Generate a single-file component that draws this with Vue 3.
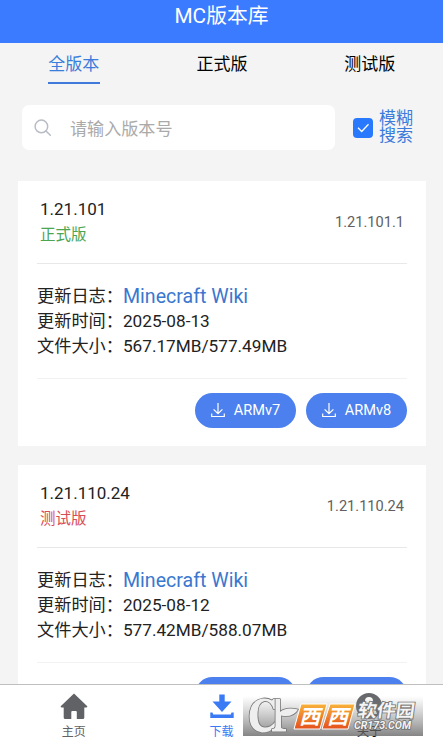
<script setup>
const tabs = ['全版本', '正式版', '测试版']
const releases = [
  { name: '1.21.101', full: '1.21.101.1', type: '正式版', kind: 'stable', date: '2025-08-13', size: '567.17MB/577.49MB' },
  { name: '1.21.110.24', full: '1.21.110.24', type: '测试版', kind: 'beta', date: '2025-08-12', size: '577.42MB/588.07MB' },
]
const archs = ['ARMv7', 'ARMv8']
</script>

<template>
  <div class="app">
    <header class="header">MC版本库</header>
    <nav class="tabs">
      <div v-for="(t, i) in tabs" :key="t" class="tab"><span :class="{ active: i === 0 }">{{ t }}</span></div>
    </nav>
    <div class="search">
      <div class="field">
        <svg width="18" height="18" viewBox="0 0 18 18" fill="none" stroke="#b8bcc4" stroke-width="1.5" stroke-linecap="round">
          <circle cx="7.4" cy="7.4" r="6.3" /><path d="M12 12L16.3 16.3" />
        </svg>
        <span>请输入版本号</span>
      </div>
      <div class="check">
        <svg width="20" height="20" viewBox="0 0 20 20" fill="none" stroke="#fff" stroke-width="1.3">
          <path d="M5 9.8L8.7 13.5L15.5 6.3" />
        </svg>
      </div>
      <div class="fuzzy">模糊<br />搜索</div>
    </div>
    <main class="list">
      <section v-for="r in releases" :key="r.name" class="card">
        <div class="top">
          <div>
            <div class="name">{{ r.name }}</div>
            <div class="type" :class="r.kind">{{ r.type }}</div>
          </div>
          <div class="full">{{ r.full }}</div>
        </div>
        <div class="body">
          <div class="row">更新日志：<a>Minecraft Wiki</a></div>
          <div class="row">更新时间：<span>{{ r.date }}</span></div>
          <div class="row">文件大小：<span>{{ r.size }}</span></div>
        </div>
        <div class="actions">
          <button v-for="a in archs" :key="a">
            <svg width="14" height="15" viewBox="0 0 14 15" fill="none" stroke="#fff" stroke-width="1.2">
              <path d="M7 0V10.6M2.6 6.4L7 10.7L11.4 6.4M.7 10.5V13.5H13.3V10.5" />
            </svg>
            <span>{{ a }}</span>
          </button>
        </div>
      </section>
    </main>
    <footer class="bottom">
      <div class="item">
        <svg width="28" height="27" viewBox="0 0 28 27"><path fill="#606266" d="M14 .5L27.3 13.2Q27.6 14.6 26 14.6H24.3V24.5Q24.3 26 22.8 26H16.8V19Q16.8 18 15.8 18H12.3Q11.3 18 11.3 19V26H5.2Q3.7 26 3.7 24.5V14.6H2Q.4 14.6 .7 13.2Z" /></svg>
        <span>主页</span>
      </div>
      <div class="item on">
        <svg width="28" height="27" viewBox="0 0 28 27"><path fill="#3a7bf5" d="M11.3 1.5H16.7V8.5H23.5L14 19L4.5 8.500H11.3ZM2.3 19.5H4.5L5.2 21.5H22.8L23.5 19.5H25.7V25H2.3Z" /></svg>
        <span>下载</span>
      </div>
      <div class="item about">
        <svg width="28" height="27" viewBox="0 0 28 27"><circle cx="14" cy="13" r="13" fill="#66686b" /><circle cx="14" cy="8" r="4" fill="#fff" /><path d="M6 21Q7 14.500 14 14.500T22 21Z" fill="#fff" /></svg>
        <span>关于</span>
      </div>
    </footer>
    <svg class="mark" width="180" height="40" viewBox="0 0 180 40">
      <defs>
        <linearGradient id="haze" x2="0" y2="1"><stop stop-color="#888" stop-opacity="0" /><stop offset="1" stop-color="#666" stop-opacity=".8" /></linearGradient>
        <linearGradient id="amber" x2="0" y2="1"><stop stop-color="#f8b339" /><stop offset="1" stop-color="#e5501d" /></linearGradient>
      </defs>
      <rect width="180" height="40" fill="url(#haze)" />
      <g fill="#eee" stroke="#777" stroke-width="1.6" stroke-linejoin="round" paint-order="stroke">
        <path d="M32 3V13H30.500Q28 5 22 5Q14.500 6 14.500 19Q14.500 31.500 22 31.500Q28 31.500 32 26V31Q27 36.500 19 36.500Q6.500 34.500 6.500 20Q7 4.500 20 2.500Q25 2 29 4.500L30.500 3Z" />
        <path d="M32.500 3H37V16Q43 10.500 55 13.500Q50 22 38 19.500V31Q38 33 43 33V35.500H29V33Q32.500 33 32.500 30Z" />
      </g>
      <g fill="url(#amber)" stroke="#fff" stroke-width="1">
        <path d="M58 8H84L77 33H51Z" /><path d="M87 8H112L105 33H79Z" />
      </g>
      <g class="tiles">
        <text transform="translate(56 27.500) skewX(-15)" textLength="21" lengthAdjust="spacingAndGlyphs">西</text>
        <text transform="translate(84 27.500) skewX(-15)" textLength="21" lengthAdjust="spacingAndGlyphs">西</text>
      </g>
      <g class="words">
        <text x="114" y="21.5" font-size="18" textLength="57" lengthAdjust="spacingAndGlyphs" transform="skewX(-8) translate(3 0)">软件园</text>
        <text x="111" y="32.5" font-size="10.5" textLength="57" lengthAdjust="spacingAndGlyphs" class="latin">CR173.COM</text>
      </g>
    </svg>
  </div>
</template>

<style>
body { margin: 0; overflow: hidden; }
</style>

<style scoped>
.app { position: relative; height: 746px; overflow: hidden; display: flex; flex-direction: column; background: #f4f4f4; color: #222; font-family: Roboto, "Noto Sans CJK SC", sans-serif; }
.header { height: 42.5px; flex: none; box-sizing: border-box; background: #3b7bff; color: #fff; font-size: 20.8px; line-height: 32px; text-align: center; }
.tabs { display: flex; height: 62.5px; flex: none; color: #000; font-size: 17px; }
.tab { flex: 1; display: flex; justify-content: center; align-items: flex-start; padding-left: 1px; }
.tab span { line-height: 24px; padding: 9.5px 0 5.5px; border-bottom: 2px solid transparent; width: 52px; text-align: center; }
.tab .active { color: #3a7ddb; border-color: #3f79dc; margin-left: -1px; }
.search { display: flex; align-items: center; height: 45px; flex: none; padding-left: 22px; }
.field { width: 313px; height: 45px; box-sizing: border-box; background: #fff; border-radius: 7px; display: flex; align-items: center; gap: 18px; padding-left: 12px; font-size: 17.1px; color: #aaa; }
.check { width: 20px; height: 20px; margin-left: 18px; border-radius: 4px; background: #2979ff; }
.check svg, .bottom svg { display: block; }
.fuzzy { margin-left: 6px; margin-top: -1px; font-size: 17px; line-height: 17px; color: #3a7bdc; }
.list { flex: 1; min-height: 0; overflow: hidden; padding: 31px 17px 0 18px; }
.card { height: 265px; box-sizing: border-box; background: #fff; padding: 0 19px; margin-bottom: 19px; }
.top { height: 83px; box-sizing: border-box; border-bottom: 1px solid #e8e8e8; padding: 16px 3px 0; display: flex; justify-content: space-between; }
.name { font-size: 17px; line-height: 24px; }
.type { font-size: 15.5px; line-height: 28px; }
.stable { color: #4ca550; }
.beta { color: #d94b55; }
.full { font-size: 14.6px; line-height: 50px; color: #606060; }
.body { height: 115px; box-sizing: border-box; border-bottom: 1px solid #f2f2f2; padding-top: 20px; }
.row { font-size: 17.2px; line-height: 25px; display: flex; }
.row a { font-size: 19.6px; color: #3a78cf; }
.actions { display: flex; justify-content: flex-end; gap: 10px; padding-top: 14px; }
.actions button { width: 101px; height: 34.5px; border: 0; padding: 0; border-radius: 18px; background: #4b80ee; color: #fff; display: flex; align-items: center; justify-content: center; gap: 9px; font: 14.6px Roboto, sans-serif; }
.bottom { height: 62px; flex: none; box-sizing: border-box; background: #fff; border-top: 1px solid #bfbfbf; display: flex; }
.item { flex: 1; display: flex; flex-direction: column; align-items: center; padding-top: 8px; font-size: 12px; line-height: 24px; color: #606266; }
.on { color: #3a7bf5; }
.about { color: #111; }
.about span { font-size: 12.5px; }
.mark { position: absolute; left: 243px; top: 696px; }
.tiles { fill: #fff; font: 700 20px "Noto Sans CJK SC", sans-serif; }
.words { fill: #f4f4f4; stroke: #707070; stroke-width: 1.6px; paint-order: stroke; font-family: Roboto, "Noto Sans CJK SC", sans-serif; font-weight: 700; }
.latin { font-style: italic; }
</style>
